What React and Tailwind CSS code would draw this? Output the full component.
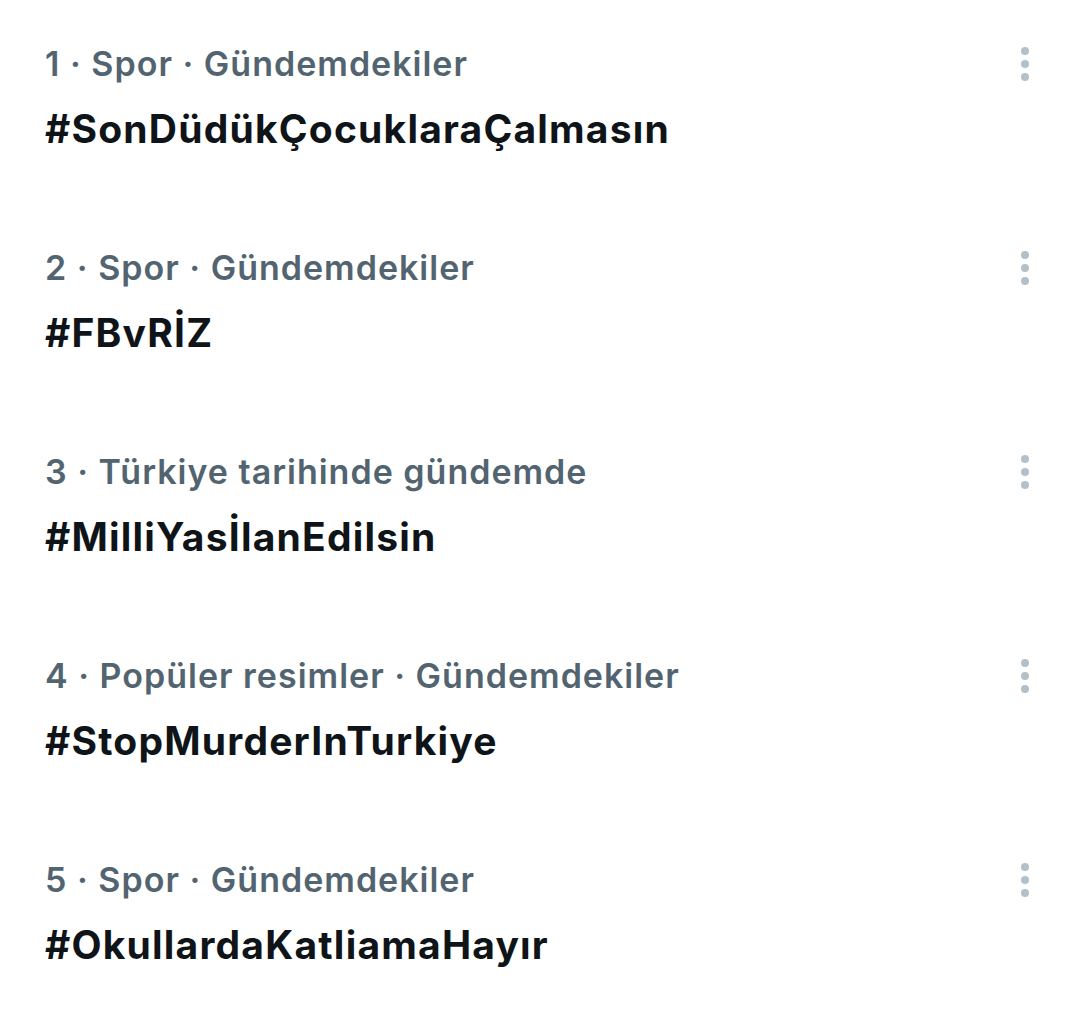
import React from "react";

const items = [
  { meta: "1 · Spor · Gündemdekiler", tag: "#SonDüdükÇocuklaraÇalmasın" },
  { meta: "2 · Spor · Gündemdekiler", tag: "#FBvRİZ" },
  { meta: "3 · Türkiye tarihinde gündemde", tag: "#MilliYasİlanEdilsin" },
  { meta: "4 · Popüler resimler · Gündemdekiler", tag: "#StopMurderInTurkiye" },
  { meta: "5 · Spor · Gündemdekiler", tag: "#OkullardaKatliamaHayır" },
];

function Dots() {
  return (
    <div className="flex flex-col items-center gap-[5px] pt-[3px]">
      <span className="w-[8px] h-[8px] rounded-full bg-[#b3c0c9]" />
      <span className="w-[8px] h-[8px] rounded-full bg-[#b3c0c9]" />
      <span className="w-[8px] h-[8px] rounded-full bg-[#b3c0c9]" />
    </div>
  );
}

export default function App() {
  return (
    <div
      className="w-[1078px] h-[1035px] bg-white overflow-hidden"
      style={{ fontFamily: "Inter, Roboto, 'Noto Sans', sans-serif" }}
    >
      {items.map((it, i) => (
        <div key={i} className="h-[204px] pt-[44px] pl-[45px] pr-[49px] flex justify-between">
          <div className="flex flex-col">
            <div className="h-[40px] leading-[40px] text-[34px] font-semibold tracking-[1px] text-[#536471]">
              {it.meta}
            </div>
            <div className="mt-[21px] h-[48px] leading-[48px] text-[39px] font-bold tracking-[1.2px] text-[#0f1419]">
              {it.tag}
            </div>
          </div>
          <Dots />
        </div>
      ))}
    </div>
  );
}
